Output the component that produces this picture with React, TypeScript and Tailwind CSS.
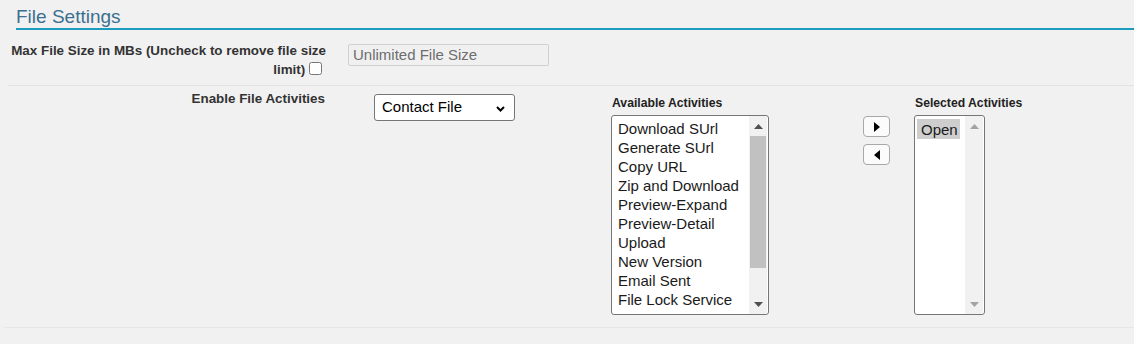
import { useState } from 'react'

const available_activities = [
  'Download SUrl',
  'Generate SUrl',
  'Copy URL',
  'Zip and Download',
  'Preview-Expand',
  'Preview-Detail',
  'Upload',
  'New Version',
  'Email Sent',
  'File Lock Service',
]

const selected_activities = ['Open']

function ScrollArrow({ dir, dim }: { dir: 'up' | 'down'; dim?: boolean }) {
  return (
    <svg width="9" height="5" viewBox="0 0 9 5" className={dim ? 'fill-[#a3a3a3]' : 'fill-[#505050]'}>
      {dir === 'up' ? <polygon points="0,5 4.5,0 9,5" /> : <polygon points="0,0 9,0 4.5,5" />}
    </svg>
  )
}

function ListBox({ items, width, highlight, thumb }: { items: string[]; width: string; highlight?: boolean; thumb?: boolean }) {
  return (
    <div className={`flex h-[200px] ${width} rounded-[3px] border border-[#767676] bg-white`}>
      <div className="flex-1 overflow-hidden pl-[2px] pt-[3px] text-[15px] leading-[19px] text-[#1a1a1a]">
        {items.map((item, i) => (
          <div
            key={item}
            className={`whitespace-nowrap px-[4px] ${highlight && i === 0 ? 'inline-block bg-[#cecece] pr-[2px] pt-[1px]' : ''}`}
          >
            {item}
          </div>
        ))}
      </div>
      <div className="mr-[1px] flex w-[18px] flex-col items-center bg-[#f1f1f1]">
        <div className="flex h-[20px] items-center justify-center pt-[1px]">
          <ScrollArrow dir="up" dim={!thumb} />
        </div>
        <div className="w-full flex-1 px-[1px]">
          {thumb && <div className="h-[132px] w-full bg-[#c1c1c1]" />}
        </div>
        <div className="flex h-[20px] items-center justify-center">
          <ScrollArrow dir="down" dim={!thumb} />
        </div>
      </div>
    </div>
  )
}

function MoveButton({ dir }: { dir: 'right' | 'left' }) {
  return (
    <button className="flex h-[21px] w-[27px] items-center justify-center rounded-[4px] border border-[#a8a8a8] bg-[#fbfbfb]">
      <svg width="6" height="10" viewBox="0 0 6 10" className="fill-black">
        {dir === 'right' ? <polygon points="0,0 6,5 0,10" /> : <polygon points="6,0 0,5 6,10" />}
      </svg>
    </button>
  )
}

export default function App() {
  const [limit_size, set_limit_size] = useState(false)
  const [file_type, set_file_type] = useState('Contact File')

  return (
    <div className="h-[344px] w-[1134px] overflow-hidden bg-[#f1f1f1] font-['Liberation_Sans',Arial,sans-serif] text-[#333]">
      {/* Section header */}
      <div className="ml-4 h-[30px] border-b-2 border-[#1c9cbc] pt-[6px]">
        <h2 className="text-[19px] leading-[21px] text-[#3b7090]">File Settings</h2>
      </div>

      {/* Max file size row */}
      <div className="ml-[8px] flex h-[56px] border-b border-[#e3e3e3]">
        <div className="w-[322px] pr-[4px] pt-[11px] text-right text-[13.4px] font-bold leading-[19px]">
          Max File Size in MBs (Uncheck to remove file size
          <br />
          limit){' '}
          <input
            type="checkbox"
            checked={limit_size}
            onChange={e => set_limit_size(e.target.checked)}
            className="relative top-[1px] m-0 mr-[4px] h-[13px] w-[13px] align-baseline"
          />
        </div>
        <div className="ml-[18px] pt-[13px]">
          <input
            disabled
            placeholder="Unlimited File Size"
            className="h-[22px] w-[201px] rounded-[2px] border border-[#d0d0d0] bg-[#f0f0f0] px-[4px] text-[15px] text-[#6d6d6d] placeholder:text-[#6d6d6d]"
          />
        </div>
      </div>

      {/* File activities row */}
      <div className="ml-[4px] flex h-[242px] border-b border-[#e6e6e6]">
        <div className="w-[326px] pr-[5px] pt-[5px] text-right text-[13.4px] font-bold leading-[16px]">
          Enable File Activities
        </div>
        <div className="ml-[44px] pt-[8px]">
          <div className="relative h-[27px] w-[141px] rounded-[3px] border border-[#767676] bg-white">
            <select
              value={file_type}
              onChange={e => set_file_type(e.target.value)}
              className="h-full w-full appearance-none bg-transparent pl-[7px] text-[15px] text-black outline-none"
            >
              <option>Contact File</option>
              <option>Account File</option>
            </select>
            <svg width="9" height="6" viewBox="0 0 9 6" className="pointer-events-none absolute right-[9px] top-[11px]">
              <polyline points="1,1 4.5,4.5 8,1" fill="none" stroke="black" strokeWidth="2" />
            </svg>
          </div>
        </div>
        <div className="ml-[96px] pt-[10px]">
          <div className="pl-[1px] text-[12.2px] font-bold leading-[14px] text-[#222]">Available Activities</div>
          <div className="mt-[5px]">
            <ListBox items={available_activities} width="w-[158px]" thumb />
          </div>
        </div>
        <div className="ml-[94px] flex flex-col gap-[7px] pt-[30px]">
          <MoveButton dir="right" />
          <MoveButton dir="left" />
        </div>
        <div className="ml-[24px] pt-[10px]">
          <div className="pl-[1px] text-[12.2px] font-bold leading-[14px] text-[#222]">Selected Activities</div>
          <div className="mt-[5px]">
            <ListBox items={selected_activities} width="w-[71px]" highlight />
          </div>
        </div>
      </div>
    </div>
  )
}
